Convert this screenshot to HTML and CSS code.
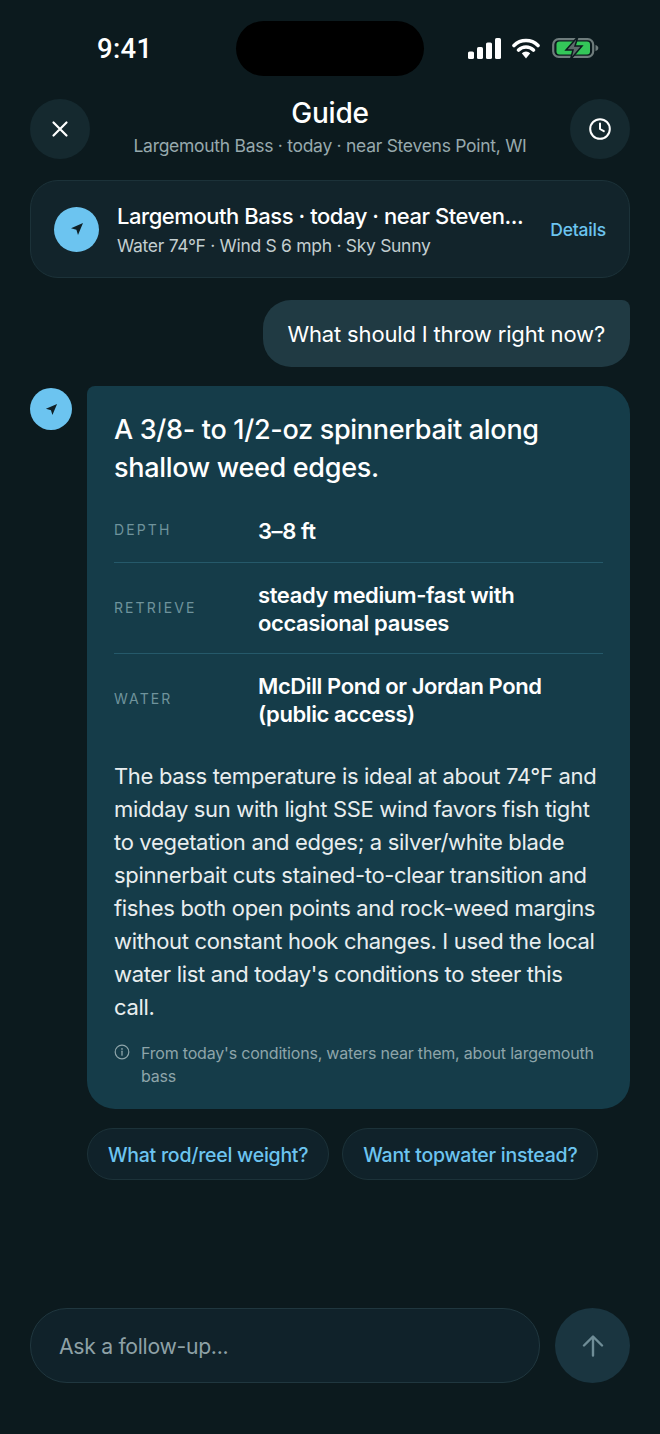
FILE: index.html
```html
<!DOCTYPE html>
<html lang="en">
<head>
<meta charset="utf-8">
<title>Guide</title>
<link rel="stylesheet" href="styles.css">
</head>
<body>
<div class="screen">
  <div class="status">
    <span class="time">9:41</span>
    <div class="island"></div>
    <div class="status-icons">
      <svg class="sig" width="33" height="21" viewBox="0 0 33 21"><rect x="0" y="13.500" width="6" height="7.500" rx="1.600"/><rect x="9" y="9" width="6" height="12" rx="1.600"/><rect x="18" y="4.500" width="6" height="16.500" rx="1.600"/><rect x="27" y="0" width="6" height="21" rx="1.600"/></svg>
      <svg class="wifi" width="28" height="21" viewBox="0 0 28 21"><path d="M2 7.500a17 17 0 0 1 24 0M6.600 12a10.600 10.600 0 0 1 14.800 0" fill="none" stroke="#fff" stroke-width="3.600" stroke-linecap="round"/><path d="M9.800 15.200a6 6 0 0 1 8.400 0L14 20.500z" fill="#fff"/></svg>
      <svg class="batt" width="47" height="24" viewBox="0 0 47 24"><rect x="1.200" y="3.200" width="40" height="17.600" rx="5.500" fill="none" stroke="#6f7c7c" stroke-width="2.200"/><rect x="4.500" y="5.500" width="33.500" height="13" rx="3" fill="#34c759"/><path d="M43.500 9c1.800.5 2.800 1.500 2.800 3s-1 2.500-2.800 3z" fill="#6f7c7c"/><path d="M26 0.500 14 14h7l-2.500 9.500L30 10h-7z" fill="#5e6b6b" stroke="#0c1a1e" stroke-width="1.500"/></svg>
    </div>
  </div>

  <header class="topbar">
    <button class="round"><svg width="20" height="20" viewBox="0 0 20 20"><path d="M3.500 3.500l13 13M16.500 3.500l-13 13" fill="none" stroke="#fff" stroke-width="2.200" stroke-linecap="round"/></svg></button>
    <div class="heading">
      <h1>Guide</h1>
      <p>Largemouth Bass · today · near Stevens Point, WI</p>
    </div>
    <button class="round"><svg width="24" height="24" viewBox="0 0 24 24"><circle cx="12" cy="12" r="9.800" fill="none" stroke="#fff" stroke-width="2"/><path d="M12 6.500V12l3.800 2.200" fill="none" stroke="#fff" stroke-width="2" stroke-linecap="round" stroke-linejoin="round"/></svg></button>
  </header>

  <section class="context">
    <span class="badge badge-lg"><svg width="14" height="14" viewBox="0 0 14 14"><path d="M13 1 1 6.200l5.400 1.500L8 13z" fill="#0f2026"/></svg></span>
    <div class="context-text">
      <div class="context-title">Largemouth Bass · today · near Steven...</div>
      <div class="context-sub">Water 74°F · Wind S 6 mph · Sky Sunny</div>
    </div>
    <span class="details">Details</span>
  </section>

  <div class="user-row"><div class="user-bubble">What should I throw right now?</div></div>

  <div class="answer-row">
    <span class="badge badge-sm"><svg width="13" height="13" viewBox="0 0 14 14"><path d="M13 1 1 6.200l5.400 1.500L8 13z" fill="#0f2026"/></svg></span>
    <article class="answer">
      <h2>A 3/8- to 1/2-oz spinnerbait along shallow weed edges.</h2>
      <dl class="facts">
        <div class="fact"><dt>DEPTH</dt><dd>3–8 ft</dd></div>
        <div class="fact"><dt>RETRIEVE</dt><dd>steady medium-fast with occasional pauses</dd></div>
        <div class="fact"><dt>WATER</dt><dd>McDill Pond or Jordan Pond (public access)</dd></div>
      </dl>
      <p class="body-text">The bass temperature is ideal at about 74°F and midday sun with light SSE wind favors fish tight to vegetation and edges; a silver/white blade spinnerbait cuts stained-to-clear transition and fishes both open points and rock-weed margins without constant hook changes. I used the local water list and today's conditions to steer this call.</p>
      <div class="source">
        <svg width="16" height="16" viewBox="0 0 16 16"><circle cx="8" cy="8" r="6.800" fill="none" stroke="#8ea5aa" stroke-width="1.200"/><path d="M8 7.200v4" stroke="#8ea5aa" stroke-width="1.300" stroke-linecap="round"/><circle cx="8" cy="4.900" r=".85" fill="#8ea5aa"/></svg>
        <span>From today's conditions, waters near them, about largemouth bass</span>
      </div>
    </article>
  </div>

  <div class="chips">
    <span class="chip">What rod/reel weight?</span>
    <span class="chip">Want topwater instead?</span>
  </div>

  <footer class="composer">
    <div class="input">Ask a follow-up...</div>
    <button class="send"><svg width="22" height="22" viewBox="0 0 22 22"><path d="M11 20.500V2M2 10.500 11 1.500l9 9" fill="none" stroke="#6f8d97" stroke-width="2.400" stroke-linecap="round" stroke-linejoin="round"/></svg></button>
  </footer>
</div>
</body>
</html>
```
FILE: styles.css
```css
* { box-sizing: border-box; margin: 0; padding: 0; }
html, body { background: #0c1a1e; }
body { font-family: "Inter", "Liberation Sans", sans-serif; color: #fff; }
.screen { position: relative; width: 660px; height: 1434px; padding: 0 30px; display: flex; flex-direction: column; overflow: hidden; }

.status { height: 99px; display: flex; justify-content: space-between; padding: 33px 31px 0 67px; align-items: flex-start; }
.time { font-family: "Roboto", sans-serif; font-size: 27.500px; font-weight: 500; line-height: 32px; letter-spacing: .3px; }
.island { position: absolute; left: 236px; top: 21px; width: 188px; height: 55px; border-radius: 28px; background: #000; }
.status-icons { display: flex; align-items: center; gap: 11px; margin-top: 3px; }
.batt { margin-left: 1px; }
.sig { fill: #fff; }

.topbar { display: flex; justify-content: space-between; height: 60px; }
.round { width: 60px; height: 60px; border: 0; border-radius: 50%; background: #15292f; display: flex; align-items: center; justify-content: center; flex: none; }
.heading { text-align: center; }
.heading h1 { font-size: 28px; line-height: 28px; font-weight: 500; letter-spacing: -.2px; }
.heading p { font-size: 17.500px; line-height: 24px; margin-top: 7px; color: #97a9ad; letter-spacing: -.28px; white-space: nowrap; }

.context { margin-top: 21px; height: 98px; border: 1.500px solid #1c3239; border-radius: 28px; background: #12242b; display: flex; align-items: center; padding: 0 23px; }
.badge { display: flex; align-items: center; justify-content: center; border-radius: 50%; background: #6cc4f0; flex: none; }
.badge-lg { width: 45px; height: 45px; }
.badge-sm { width: 42px; height: 42px; margin-top: 2px; }
.context-text { margin-left: 18px; flex: 1; min-width: 0; padding-top: 2px; }
.context-title { font-size: 22px; line-height: 28px; font-weight: 500; letter-spacing: -.45px; white-space: nowrap; }
.context-sub { font-size: 17.500px; line-height: 24px; color: #c3ced0; margin-top: 4px; letter-spacing: -.3px; white-space: nowrap; }
.details { font-size: 17.500px; font-weight: 500; color: #6cc4f0; letter-spacing: -.2px; }

.user-row { display: flex; justify-content: flex-end; margin-top: 22px; }
.user-bubble { height: 67px; padding: 0 25px 0 24px; display: flex; align-items: center; background: #203a43; border-radius: 28px 8px 28px 28px; font-size: 22px; letter-spacing: -.16px; }

.answer-row { display: flex; align-items: flex-start; gap: 15px; margin-top: 19px; }
.answer { width: 543px; height: 723px; border-radius: 8px 28px 28px 28px; background: #153c49; padding: 25px 27px 0; }
.answer h2 { font-size: 27px; line-height: 38px; font-weight: 500; letter-spacing: -.3px; }
.facts { margin-top: 12px; }
.fact { display: flex; align-items: center; padding: 18px 0 16px; border-bottom: 1px solid #25596a; }
.fact:first-child { padding-bottom: 17px; }
.fact:last-child { border-bottom: 0; padding-bottom: 17px; }
dt { width: 144px; font-size: 14px; letter-spacing: 2.100px; color: #6f939c; flex: none; margin-top: -3px; }
dd { font-size: 22px; line-height: 28px; font-weight: 600; letter-spacing: -.4px; }
.body-text { font-size: 22px; line-height: 33px; color: #e9eeef; margin-top: 15px; letter-spacing: -.33px; }
.source { display: flex; gap: 11px; margin-top: 18px; color: #8ea5aa; font-size: 16px; line-height: 23px; letter-spacing: -.2px; }
.source svg { flex: none; margin-top: 2px; }

.chips { display: flex; gap: 13px; margin: 19px 0 0 57px; }
.chip { height: 52px; padding: 1px 20px 0; display: flex; align-items: center; border: 1.500px solid #1c3239; border-radius: 26px; background: #10222a; color: #6cc4f0; font-size: 19.500px; font-weight: 500; letter-spacing: -.25px; white-space: nowrap; }

.composer { margin-top: auto; padding-bottom: 51px; display: flex; gap: 15px; }
.input { flex: 1; height: 75px; padding: 1px 28px 0; display: flex; align-items: center; border: 1.500px solid #20373f; border-radius: 37px; background: #10222a; font-size: 21.200px; color: #8ea1a6; letter-spacing: -.3px; }
.send { width: 75px; height: 75px; border: 0; border-radius: 50%; background: #1a3540; display: flex; align-items: center; justify-content: center; flex: none; }
```
